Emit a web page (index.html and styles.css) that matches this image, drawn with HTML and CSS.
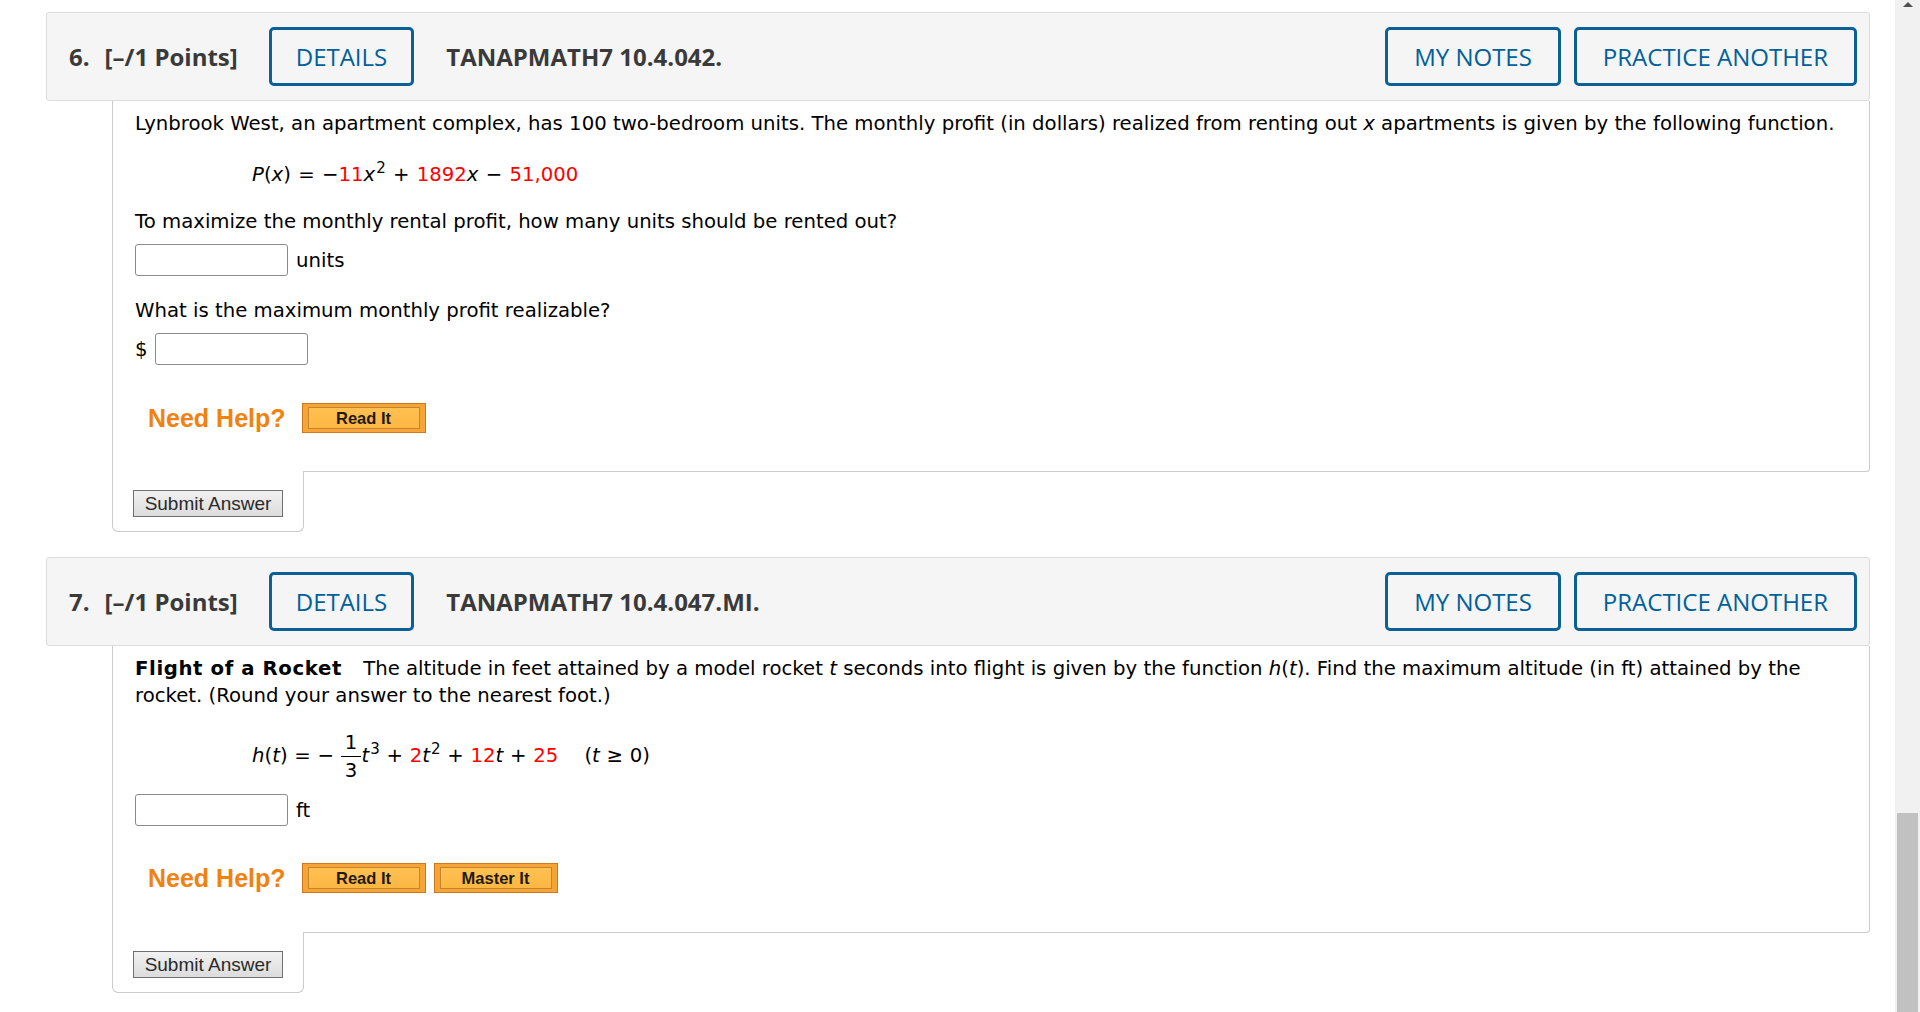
FILE: index.html
```html
<!DOCTYPE html>
<html>
  <head>
    <meta http-equiv="Content-Type" content="text/html; charset=UTF-8" />
    <title>Assignment</title>
    <link rel="stylesheet" href="styles.css">
  </head>
  <body>
    <div class="page">
      <div class="question">
        <div class="q-header">
          <span class="q-num">6.</span>
          <span class="q-points">[–/1 Points]</span>
          <button class="q-btn q-details">DETAILS</button>
          <span class="q-title">TANAPMATH7 10.4.042.</span>
          <button class="q-btn q-notes">MY NOTES</button>
          <button class="q-btn q-practice">PRACTICE ANOTHER</button>
        </div>
        <div class="q-body">
          <p class="text">Lynbrook West, an apartment complex, has 100 two-bedroom units. The monthly profit (in dollars) realized from renting out <i>x</i> apartments is given by the following function.</p>
          <p class="formula formula-p"><i>P</i>(<i>x</i>) = −<span class="red">11</span><i>x</i><sup>2</sup> + <span class="red">1892</span><i>x</i> − <span class="red">51,000</span></p>
          <p class="text after-formula">To maximize the monthly rental profit, how many units should be rented out?</p>
          <div class="answer">
            <input class="answer-box" type="text" />
            <span class="unit">units</span>
          </div>
          <p class="text after-answer">What is the maximum monthly profit realizable?</p>
          <div class="answer">
            <span class="dollar">$</span>
            <input class="answer-box" type="text" />
          </div>
          <div class="help">
            <span class="help-label">Need Help?</span>
            <button class="help-btn"><span>Read It</span></button>
          </div>
        </div>
        <div class="q-submit">
          <button class="submit-btn">Submit Answer</button>
        </div>
      </div>

      <div class="question">
        <div class="q-header">
          <span class="q-num">7.</span>
          <span class="q-points">[–/1 Points]</span>
          <button class="q-btn q-details">DETAILS</button>
          <span class="q-title">TANAPMATH7 10.4.047.MI.</span>
          <button class="q-btn q-notes">MY NOTES</button>
          <button class="q-btn q-practice">PRACTICE ANOTHER</button>
        </div>
        <div class="q-body">
          <p class="text"><b class="q-name">Flight of a Rocket</b> The altitude in feet attained by a model rocket <i>t</i> seconds into flight is given by the function <i>h</i>(<i>t</i>). Find the maximum altitude (in ft) attained by the rocket. (Round your answer to the nearest foot.)</p>
          <p class="formula formula-h"><i>h</i>(<i>t</i>) = − <span class="frac"><span class="num">1</span><span class="den">3</span></span><i>t</i><sup>3</sup> + <span class="red">2</span><i>t</i><sup>2</sup> + <span class="red">12</span><i>t</i> + <span class="red">25</span><span class="cond">(<i>t</i> ≥ 0)</span></p>
          <div class="answer answer-ft">
            <input class="answer-box" type="text" />
            <span class="unit">ft</span>
          </div>
          <div class="help help-ft">
            <span class="help-label">Need Help?</span>
            <button class="help-btn"><span>Read It</span></button>
            <button class="help-btn"><span>Master It</span></button>
          </div>
        </div>
        <div class="q-submit">
          <button class="submit-btn">Submit Answer</button>
        </div>
      </div>
    </div>

    <div class="scrollbar">
      <div class="scroll-arrow"></div>
      <div class="scroll-track"></div>
      <div class="scroll-thumb"></div>
    </div>
  </body>
</html>
```

FILE: styles.css
```css
html,
body {
  margin: 0;
  height: 1012px;
  overflow: hidden;
}

body {
  display: flex;
  background-color: white;
  color: black;
  font-family: "DejaVu Sans", Verdana, sans-serif;
  font-size: 19.7px;
  line-height: 27px;
}

.page {
  flex: 1;
  padding: 12px 25px 0 46px;
}

.question {
  margin-bottom: 25px;
}

/* header bar */
.q-header {
  display: flex;
  align-items: center;
  box-sizing: border-box;
  height: 89px;
  padding: 0 12px 0 22px;
  background-color: #f5f5f5;
  border: 1px solid #dcdcdc;
  border-radius: 3px;
  font-family: "Open Sans", sans-serif;
  font-size: 24px;
  line-height: 1.3;
  color: #3a3a3a;
}

.q-num,
.q-points,
.q-title {
  font-weight: 700;
}

.q-num {
  margin-right: 15px;
}

.q-points {
  margin-right: 31px;
}

.q-btn {
  box-sizing: border-box;
  height: 59px;
  padding: 0 24px;
  background-color: transparent;
  border: 3px solid #0b6096;
  border-radius: 5px;
  font-family: "Open Sans", sans-serif;
  font-size: 24px;
  color: #00609a;
}

.q-details {
  margin-right: 32px;
}

.q-notes {
  margin-left: auto;
  padding: 0 26px;
}

.q-practice {
  margin-left: 13px;
  padding: 0 26px;
}

/* question body */
.q-body {
  margin-left: 66px;
  padding: 9px 22px 38px 22px;
  border: 1px solid #cbcbcb;
  border-top: none;
  border-radius: 0 0 4px 0;
}

.q-body p {
  margin: 0;
}

.q-name {
  margin-right: 15px;
  letter-spacing: 0.6px;
}

.formula {
  padding-left: 117px;
  word-spacing: 1px;
}

.formula-p {
  margin-top: 24px !important;
}

.formula-h {
  margin-top: 20px !important;
  word-spacing: 0.5px;
}

.formula sup {
  font-size: 15px;
  line-height: 0;
  vertical-align: 8px;
  margin-left: 1px;
}

.red {
  color: #ff0000;
}

.frac {
  display: inline-flex;
  flex-direction: column;
  vertical-align: middle;
  text-align: center;
}

.frac span {
  line-height: 27px;
  padding: 0 4px;
}

.frac .num {
  border-bottom: 1px solid black;
}

.cond {
  margin-left: 26px;
}

.after-formula {
  margin-top: 20px !important;
}

.after-answer {
  margin-top: 21px !important;
}

.answer {
  display: flex;
  align-items: center;
  gap: 7px;
  margin-top: 9px;
}

.answer-ft {
  margin-top: 10px;
}

.answer-box {
  box-sizing: border-box;
  width: 153px;
  height: 32px;
  margin: 0;
  border: 1px solid #8a8a8a;
  border-radius: 3px;
}

.unit {
  margin-left: 1px;
}

/* need help row */
.help {
  display: flex;
  align-items: center;
  margin-top: 38px;
  padding-left: 13px;
}

.help-ft {
  margin-top: 37px;
  padding-bottom: 1px;
}

.help-label {
  margin-right: 16px;
  font-family: "Liberation Sans", Arial, sans-serif;
  font-size: 25px;
  font-weight: 700;
  line-height: 30px;
  color: #f0820f;
}

.help-btn {
  box-sizing: border-box;
  width: 124px;
  height: 30px;
  margin-right: 8px;
  padding: 3px 5px;
  background-color: #f6a436;
  border: 1px solid #d2781c;
  font-family: "Liberation Sans", Arial, sans-serif;
  font-size: 16.5px;
  font-weight: 700;
  color: #1e1a10;
}

.help-btn span {
  display: block;
  height: 22px;
  line-height: 21px;
  box-sizing: border-box;
  border: 1px solid #c4852e;
  background: linear-gradient(#ffc152, #fcb743);
}

/* submit tab */
.q-submit {
  width: 170px;
  margin-left: 66px;
  margin-top: -1px;
  padding: 19px 0 14px 20px;
  background-color: white;
  border: 1px solid #cbcbcb;
  border-top: none;
  border-radius: 0 0 6px 6px;
}

.submit-btn {
  display: block;
  box-sizing: border-box;
  width: 150px;
  height: 27px;
  padding: 0;
  background: linear-gradient(#f1f1f1, #dcdcdc);
  border: 1px solid #707070;
  border-radius: 0;
  font-family: "Liberation Sans", Arial, sans-serif;
  font-size: 19px;
  color: #2a2a2a;
}

/* page scrollbar */
.scrollbar {
  display: flex;
  flex-direction: column;
  width: 25px;
  background-color: #f1f1f1;
}

.scroll-arrow {
  width: 0;
  height: 0;
  margin: 2px auto 0 auto;
  border-left: 5px solid transparent;
  border-right: 5px solid transparent;
  border-bottom: 5px solid #505050;
}

.scroll-track {
  flex: 1;
}

.scroll-thumb {
  height: 199px;
  margin: 0 2px 0 2px;
  background-color: #c1c1c1;
}
```
